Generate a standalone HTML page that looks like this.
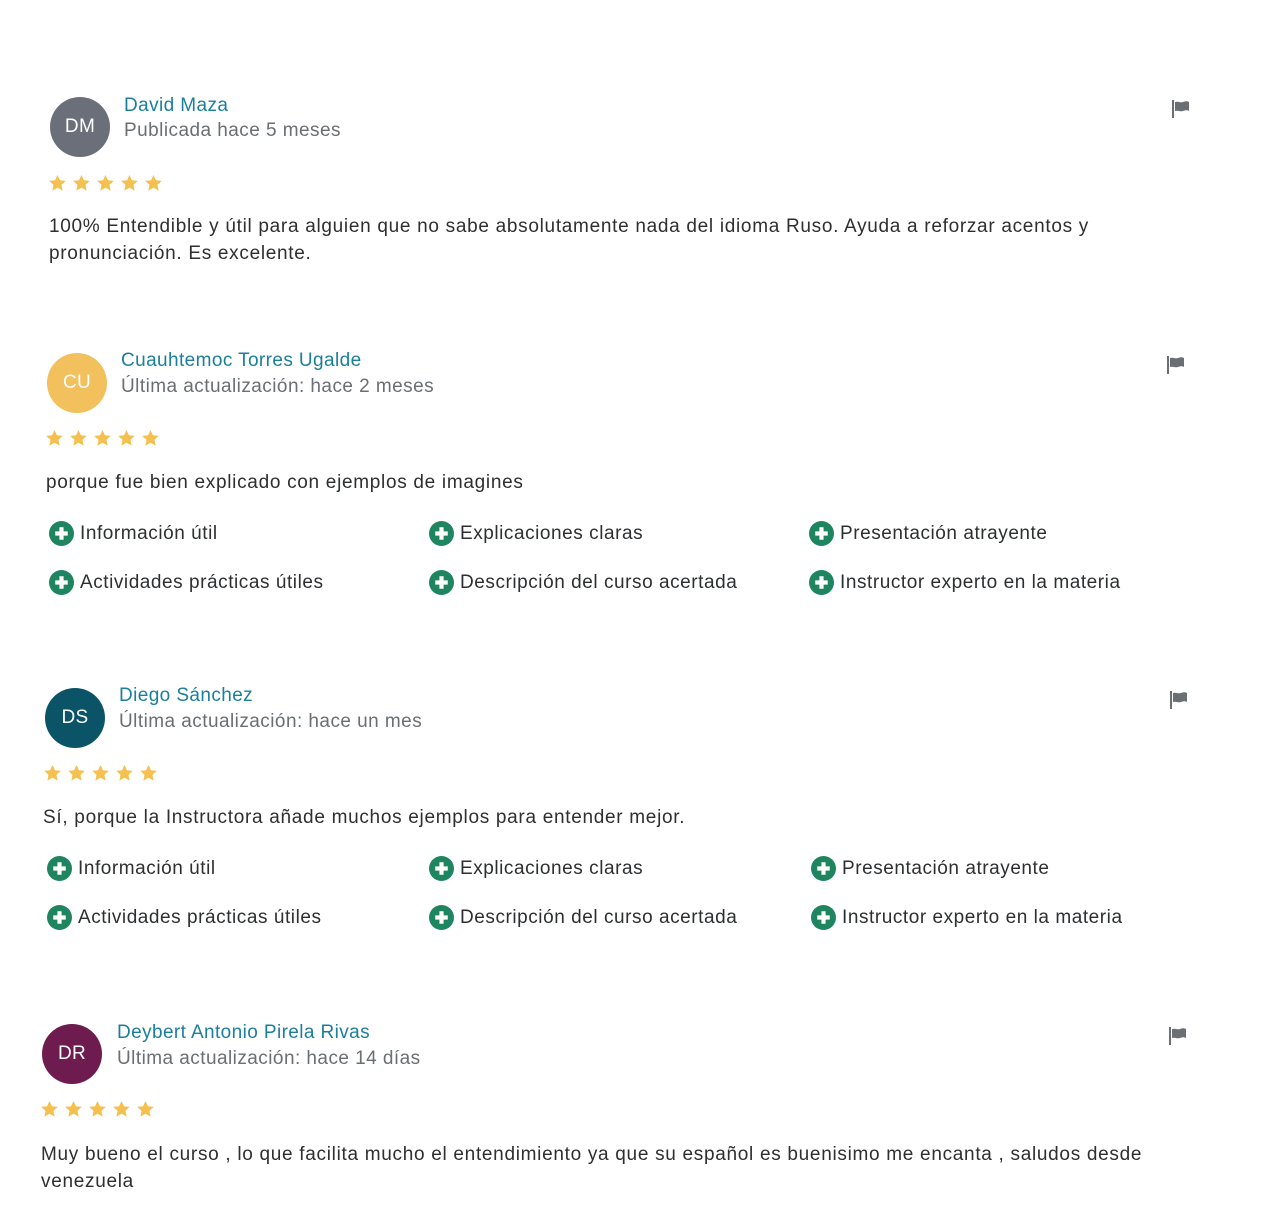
<!DOCTYPE html>
<html><head><meta charset="utf-8"><style>
body{margin:0;width:1276px;height:1226px;background:#fff;font-family:"Liberation Sans",sans-serif;position:relative;overflow:hidden}
.a{position:absolute;white-space:nowrap}
.av{position:absolute;width:60px;height:60px;border-radius:50%;color:#fff;font-size:19px;display:flex;align-items:center;justify-content:center;letter-spacing:0.3px}
.nm{color:#1b7f9b;font-size:19px;letter-spacing:0.4px}
.sb{color:#6a6f73;font-size:19px;letter-spacing:0.45px}
.tx{color:#2d2f31;font-size:19px;line-height:27px;letter-spacing:0.7px}
.st{position:absolute;display:flex;gap:5px}
.tg{position:absolute;color:#2d2f31;font-size:19px;display:flex;align-items:center;white-space:nowrap;letter-spacing:0.55px}
.tg svg{margin-right:6px}
</style></head><body>
<svg width="0" height="0" style="position:absolute"><defs>
<symbol id="s" viewBox="0 0 20 20"><path d="M10 1l2.6 5.6 6.1.7-4.5 4.2 1.2 6L10 14.5 4.6 17.5l1.2-6L1.3 7.3l6.1-.7z" fill="#f4c150"/></symbol>
<symbol id="p" viewBox="0 0 24 24"><circle cx="12" cy="12" r="12" fill="#1e8560"/><path d="M12 6v12M6 12h12" stroke="#fff" stroke-width="4"/></symbol>
<symbol id="f" viewBox="0 0 20 18"><rect x="1" y="0" width="2" height="18" fill="#6a6f73"/><path d="M4 2c3-1 5 1 8 0s4-1 6 0v9c-2-1-3-1-6 0s-5-1-8 0z" fill="#6a6f73"/></symbol>
</defs></svg>

<!-- Review 1 -->
<div class="av" style="left:50px;top:97px;background:#6a6f7a">DM</div>
<div class="a nm" style="left:124px;top:95px">David Maza</div>
<div class="a sb" style="left:124px;top:120px">Publicada hace 5 meses</div>
<div class="st" style="left:48px;top:174px"><svg width="19" height="19"><use href="#s"/></svg><svg width="19" height="19"><use href="#s"/></svg><svg width="19" height="19"><use href="#s"/></svg><svg width="19" height="19"><use href="#s"/></svg><svg width="19" height="19"><use href="#s"/></svg></div>
<div class="a tx" style="left:49px;top:213px;white-space:normal;width:1060px">100% Entendible y útil para alguien que no sabe absolutamente nada del idioma Ruso. Ayuda a reforzar acentos y pronunciación. Es excelente.</div>
<svg class="a" style="left:1171px;top:100px" width="20" height="18"><use href="#f"/></svg>

<!-- Review 2 -->
<div class="av" style="left:47px;top:353px;background:#f2c05c">CU</div>
<div class="a nm" style="left:121px;top:350px">Cuauhtemoc Torres Ugalde</div>
<div class="a sb" style="left:121px;top:376px">Última actualización: hace 2 meses</div>
<div class="st" style="left:45px;top:429px"><svg width="19" height="19"><use href="#s"/></svg><svg width="19" height="19"><use href="#s"/></svg><svg width="19" height="19"><use href="#s"/></svg><svg width="19" height="19"><use href="#s"/></svg><svg width="19" height="19"><use href="#s"/></svg></div>
<div class="a tx" style="left:46px;top:469px">porque fue bien explicado con ejemplos de imagines</div>
<div class="tg" style="left:49px;top:521px"><svg width="25" height="25"><use href="#p"/></svg>Información útil</div>
<div class="tg" style="left:429px;top:521px"><svg width="25" height="25"><use href="#p"/></svg>Explicaciones claras</div>
<div class="tg" style="left:809px;top:521px"><svg width="25" height="25"><use href="#p"/></svg>Presentación atrayente</div>
<div class="tg" style="left:49px;top:570px"><svg width="25" height="25"><use href="#p"/></svg>Actividades prácticas útiles</div>
<div class="tg" style="left:429px;top:570px"><svg width="25" height="25"><use href="#p"/></svg>Descripción del curso acertada</div>
<div class="tg" style="left:809px;top:570px"><svg width="25" height="25"><use href="#p"/></svg>Instructor experto en la materia</div>
<svg class="a" style="left:1166px;top:356px" width="20" height="18"><use href="#f"/></svg>

<!-- Review 3 -->
<div class="av" style="left:45px;top:688px;background:#0b5468">DS</div>
<div class="a nm" style="left:119px;top:685px">Diego Sánchez</div>
<div class="a sb" style="left:119px;top:711px">Última actualización: hace un mes</div>
<div class="st" style="left:43px;top:764px"><svg width="19" height="19"><use href="#s"/></svg><svg width="19" height="19"><use href="#s"/></svg><svg width="19" height="19"><use href="#s"/></svg><svg width="19" height="19"><use href="#s"/></svg><svg width="19" height="19"><use href="#s"/></svg></div>
<div class="a tx" style="left:43px;top:804px">Sí, porque la Instructora añade muchos ejemplos para entender mejor.</div>
<div class="tg" style="left:47px;top:856px"><svg width="25" height="25"><use href="#p"/></svg>Información útil</div>
<div class="tg" style="left:429px;top:856px"><svg width="25" height="25"><use href="#p"/></svg>Explicaciones claras</div>
<div class="tg" style="left:811px;top:856px"><svg width="25" height="25"><use href="#p"/></svg>Presentación atrayente</div>
<div class="tg" style="left:47px;top:905px"><svg width="25" height="25"><use href="#p"/></svg>Actividades prácticas útiles</div>
<div class="tg" style="left:429px;top:905px"><svg width="25" height="25"><use href="#p"/></svg>Descripción del curso acertada</div>
<div class="tg" style="left:811px;top:905px"><svg width="25" height="25"><use href="#p"/></svg>Instructor experto en la materia</div>
<svg class="a" style="left:1169px;top:691px" width="20" height="18"><use href="#f"/></svg>

<!-- Review 4 -->
<div class="av" style="left:42px;top:1024px;background:#6e1b4f">DR</div>
<div class="a nm" style="left:117px;top:1022px">Deybert Antonio Pirela Rivas</div>
<div class="a sb" style="left:117px;top:1048px">Última actualización: hace 14 días</div>
<div class="st" style="left:40px;top:1100px"><svg width="19" height="19"><use href="#s"/></svg><svg width="19" height="19"><use href="#s"/></svg><svg width="19" height="19"><use href="#s"/></svg><svg width="19" height="19"><use href="#s"/></svg><svg width="19" height="19"><use href="#s"/></svg></div>
<div class="a tx" style="left:41px;top:1141px;white-space:normal;width:1110px">Muy bueno el curso , lo que facilita mucho el entendimiento ya que su español es buenisimo me encanta , saludos desde venezuela</div>
<svg class="a" style="left:1168px;top:1027px" width="20" height="18"><use href="#f"/></svg>
</body></html>
